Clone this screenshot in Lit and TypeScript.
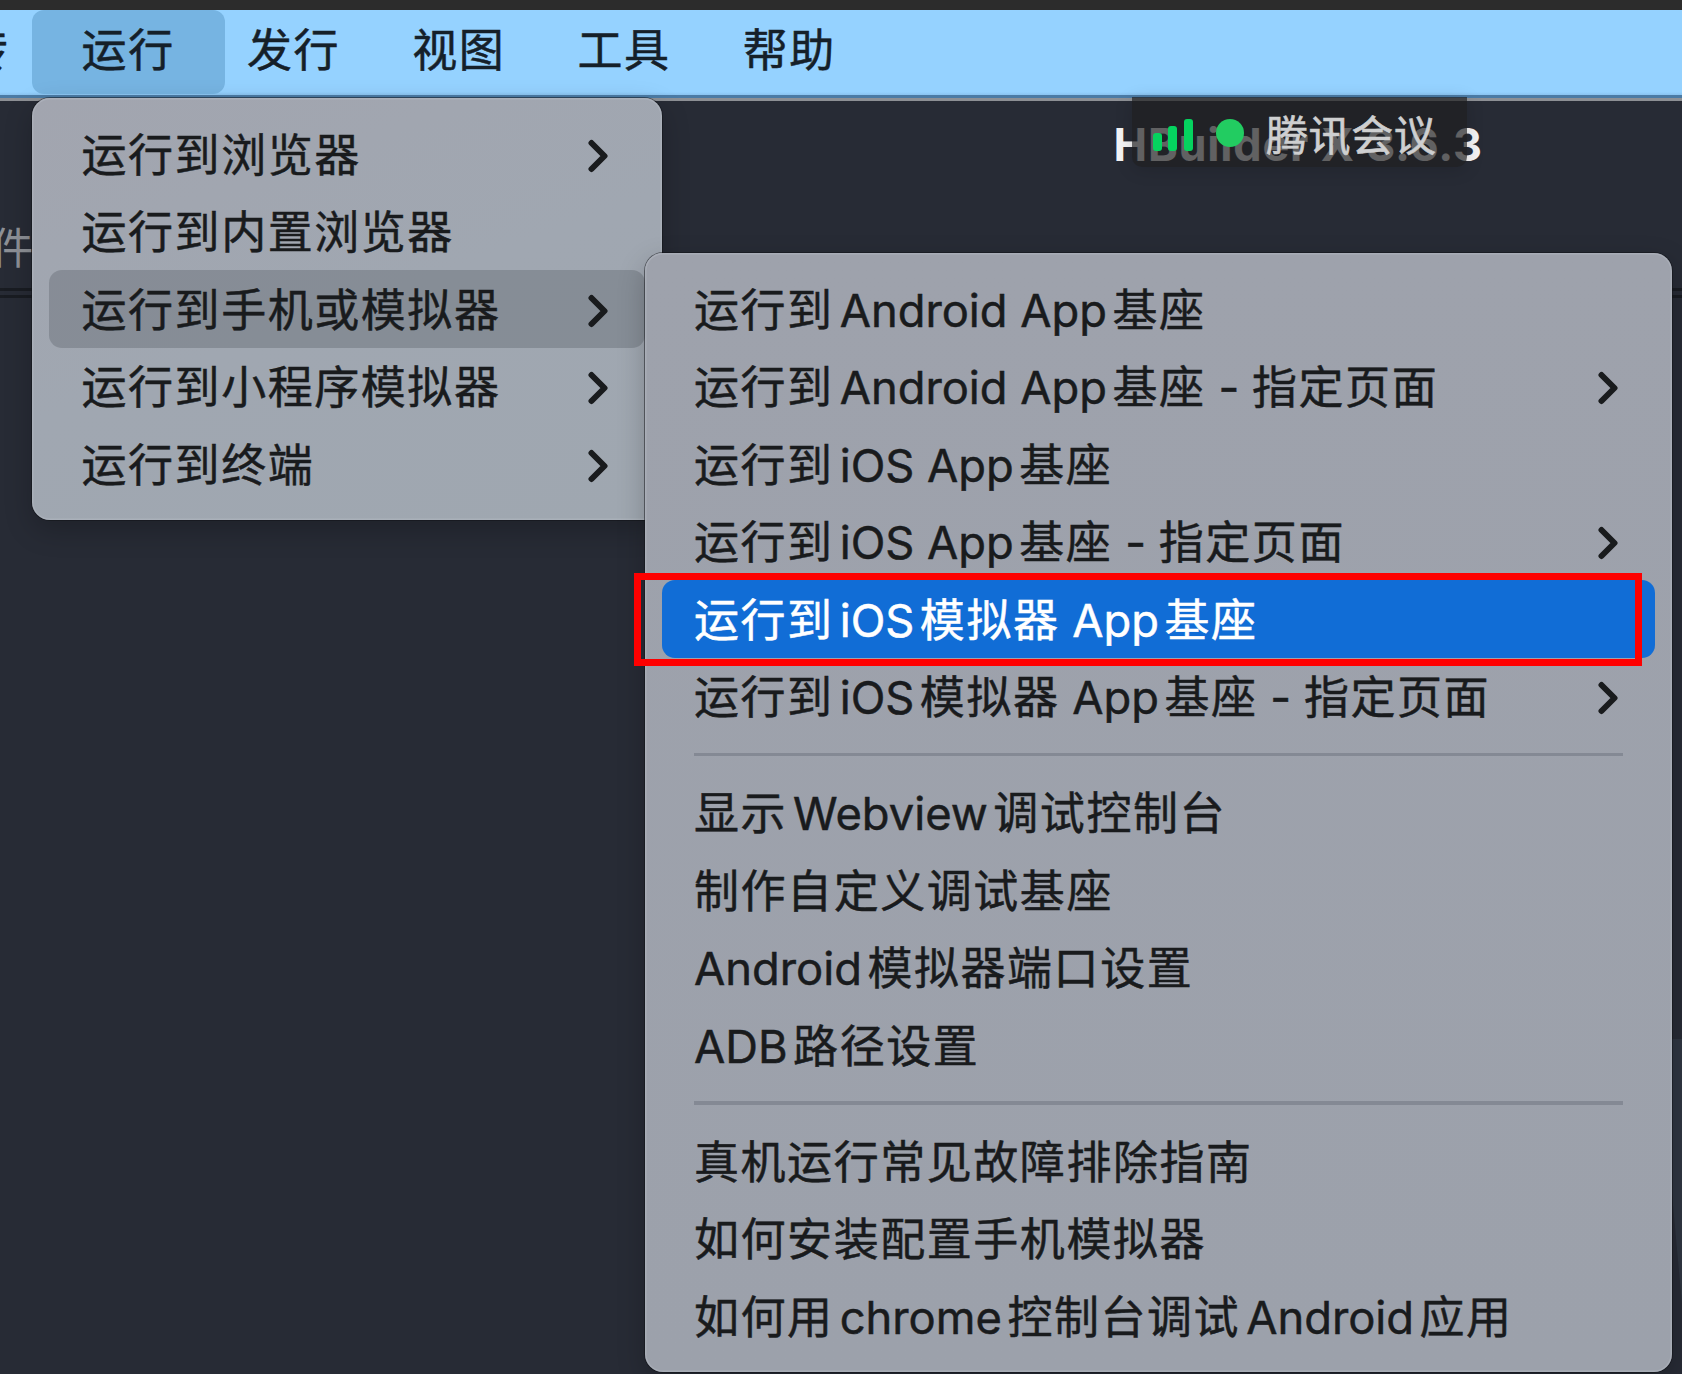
import {LitElement, html, css, nothing} from 'lit';
import {customElement, property} from 'lit/decorators.js';
import {classMap} from 'lit/directives/class-map.js';

interface Entry {
    label?: string;
    submenu?: boolean;
    state?: 'open' | 'selected';
    separator?: boolean;
}

const BAR = ['跳转', '运行', '发行', '视图', '工具', '帮助'];

const RUN_MENU: Entry[] = [
    {label: '运行到浏览器', submenu: true},
    {label: '运行到内置浏览器'},
    {label: '运行到手机或模拟器', submenu: true, state: 'open'},
    {label: '运行到小程序模拟器', submenu: true},
    {label: '运行到终端', submenu: true},
];

const DEVICE_MENU: Entry[] = [
    {label: '运行到Android App基座'},
    {label: '运行到Android App基座 - 指定页面', submenu: true},
    {label: '运行到iOS App基座'},
    {label: '运行到iOS App基座 - 指定页面', submenu: true},
    {label: '运行到iOS模拟器 App基座', state: 'selected'},
    {label: '运行到iOS模拟器 App基座 - 指定页面', submenu: true},
    {separator: true},
    {label: '显示Webview调试控制台'},
    {label: '制作自定义调试基座'},
    {label: 'Android模拟器端口设置'},
    {label: 'ADB路径设置'},
    {separator: true},
    {label: '真机运行常见故障排除指南'},
    {label: '如何安装配置手机模拟器'},
    {label: '如何用chrome控制台调试Android应用'},
];

@customElement('menu-label')
export class MenuLabel extends LitElement {
    static styles = css`
        :host {
            display: block;
            white-space: pre;
            -webkit-text-stroke: 0.5px;
        }

        .latin {
            font-size: 45.3px;
            letter-spacing: 0;
        }

        .before {
            margin-left: 6px;
        }

        .after {
            margin-right: 5.5px;
        }
    `;

    @property() text = '';

    // Latin runs get a little air where they touch a Han character
    render() {
        const runs = this.text.match(/[\x20-\x7e]+|[^\x20-\x7e]+/g) ?? [];
        return runs.map((run, i) => {
            if (!/[\x20-\x7e]/.test(run)) return html`<span>${run}</span>`;
            const classes = {
                latin: true,
                before: i > 0 && !run.startsWith(' '),
                after: i < runs.length - 1 && !run.endsWith(' '),
            };
            return html`<span class=${classMap(classes)}>${run}</span>`;
        });
    }
}

@customElement('menu-panel')
export class MenuPanel extends LitElement {
    static styles = css`
        :host {
            box-sizing: border-box;
            display: block;
            padding: 17px;
            color: #191b1d;
            border-radius: 18px;
            box-shadow:
                    0 0 0 1px rgb(15 17 22 / 50%),
                    0 10px 28px rgb(0 0 0 / 22%),
                    inset 0 0 0 1.5px rgb(190 196 204 / 35%);
        }

        .row {
            box-sizing: border-box;
            display: flex;
            align-items: center;
            justify-content: space-between;
            height: 77.5px;
            padding: 4px 37px 0 32.5px;
            line-height: 60px;
            border-radius: 13px;
        }

        .open {
            background: rgb(68 74 84 / 28%);
        }

        .selected {
            color: #fff;
            background: #116dd6;
        }

        .rule {
            height: 3.5px;
            margin: 17.5px 32px;
            background: #848994;
        }

        .chevron {
            display: block;
            width: 20px;
            height: 34px;
            fill: none;
            stroke: currentcolor;
            stroke-width: 6;
            stroke-linecap: round;
            stroke-linejoin: round;
        }
    `;

    @property({attribute: false}) entries: Entry[] = [];

    render() {
        return this.entries.map((entry) => entry.separator
            ? html`<div class="rule"></div>`
            : html`
                <div class="row ${entry.state ?? ''}">
                    <menu-label .text=${entry.label ?? ''}></menu-label>
                    ${entry.submenu
                        ? html`<svg class="chevron" viewBox="0 0 20 34"><path d="M3.5 4 16.5 17 3.5 30"/></svg>`
                        : nothing}
                </div>
            `);
    }
}

@customElement('meeting-badge')
export class MeetingBadge extends LitElement {
    static styles = css`
        :host {
            box-sizing: border-box;
            display: flex;
            align-items: flex-start;
            padding-left: 20.5px;
            background: rgb(30 31 32 / 69%);
            border-radius: 0 0 10px 10px;
            box-shadow: 0 3px 18px rgb(0 0 0 / 14%);
        }

        .bars {
            display: flex;
            gap: 6.5px;
            align-items: flex-end;
            width: 40px;
            height: 32px;
            margin-top: 22px;
        }

        .bar {
            width: 9px;
            background: #05d35f;
            border-radius: 3px;
        }

        .low {
            height: 18px;
        }

        .mid {
            height: 25px;
        }

        .high {
            height: 32px;
        }

        .dot {
            width: 28px;
            height: 28px;
            margin: 22px 22px 0 23.5px;
            background: #22cc61;
            border-radius: 50%;
        }

        .name {
            margin-top: 9px;
            font-size: 42px;
            line-height: 60px;
            letter-spacing: 0.6px;
            white-space: nowrap;
            color: #cecfd0;
            -webkit-text-stroke: 0.6px;
        }
    `;

    render() {
        return html`
            <div class="bars">
                <i class="bar low"></i>
                <i class="bar mid"></i>
                <i class="bar high"></i>
            </div>
            <i class="dot"></i>
            <span class="name">腾讯会议</span>
        `;
    }
}

@customElement('app-root')
export class AppRoot extends LitElement {
    static styles = css`
        :host {
            position: relative;
            display: flex;
            flex-direction: column;
            width: 1682px;
            height: 1374px;
            overflow: hidden;
            font-family: Inter, "Noto Sans CJK SC", sans-serif;
            font-size: 45px;
            letter-spacing: 1.55px;
            background: #272b35;
        }

        .bezel {
            flex: none;
            height: 10px;
            background: #2c2c2c;
        }

        .menubar {
            box-sizing: border-box;
            display: flex;
            flex: none;
            height: 91px;
            padding-bottom: 6px;
            margin-left: -119.5px;
            color: #152029;
            background: linear-gradient(#95d2ff 0 82px, #8ac3f0 85px, #4b7ba5 85px 88px, #8d9095 88px);
            -webkit-text-stroke: 0.5px;
        }

        .item {
            position: relative;
            box-sizing: border-box;
            flex: none;
            width: 165.3px;
            padding-left: 35.8px;
            line-height: 82px;
            white-space: nowrap;
        }

        .item.active::before {
            position: absolute;
            inset: 0 -14px 1px;
            z-index: 0;
            content: "";
            background: #76b4e2;
            border-radius: 12px;
        }

        .item span {
            position: relative;
        }

        .titlebar {
            box-sizing: border-box;
            flex: none;
            height: 93px;
            padding: 10px 0 0 1113.5px;
            font-size: 45px;
            font-weight: 700;
            line-height: 68px;
            letter-spacing: 0.8px;
            white-space: nowrap;
            color: #f4f4f5;
        }

        .tabs {
            box-sizing: border-box;
            flex: none;
            height: 104px;
            padding: 24px 0 0;
            margin-left: -9.5px;
            font-size: 43px;
            line-height: 60px;
            color: #8d9096;
            border-bottom: 3px solid #191c22;
        }

        .tabs::after {
            display: block;
            height: 3px;
            margin-top: 10px;
            content: "";
            background: #191c22;
        }

        .backdrop {
            position: absolute;
            top: 1039px;
            right: 0;
            width: 14px;
            height: 265px;
            background: #2f3641;
            clip-path: polygon(0 0, 100% 0, 100% 100%, 4px 155px, 0 130px);
        }

        .badge {
            position: absolute;
            top: 97px;
            left: 1132px;
            width: 335px;
            height: 70px;
        }

        .run {
            position: absolute;
            top: 98px;
            left: 32px;
            width: 629.5px;
            height: 422px;
            background: linear-gradient(160deg, #a2a5af, #a0a7b1 50%, #9fa7b0);
        }

        .device {
            position: absolute;
            top: 253px;
            left: 644.5px;
            width: 1027.5px;
            height: 1118.5px;
            background: linear-gradient(#9ea2ac, #9ca1ab);
        }

        .callout {
            position: absolute;
            top: 573px;
            left: 634px;
            box-sizing: border-box;
            width: 1008px;
            height: 93px;
            border: 7px solid #fe0000;
        }
    `;

    render() {
        return html`
            <div class="bezel"></div>
            <nav class="menubar">
                ${BAR.map((name) => html`
                    <div class=${classMap({item: true, active: name === '运行'})}><span>${name}</span></div>
                `)}
            </nav>
            <div class="titlebar">HBuilder X 3.6.3</div>
            <div class="tabs">件</div>
            <div class="backdrop"></div>
            <meeting-badge class="badge"></meeting-badge>
            <menu-panel class="run" .entries=${RUN_MENU}></menu-panel>
            <menu-panel class="device" .entries=${DEVICE_MENU}></menu-panel>
            <div class="callout"></div>
        `;
    }
}
